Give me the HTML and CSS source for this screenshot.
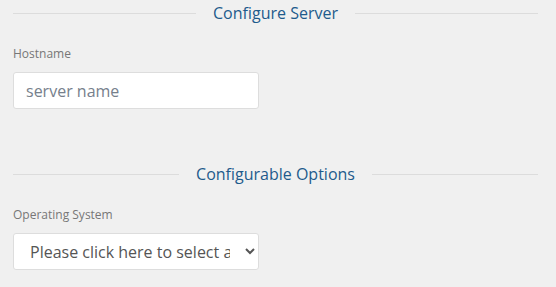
FILE: index.html
```html
<!DOCTYPE html>
<html lang="en">
<head>
  <meta charset="UTF-8">
  <meta name="viewport" content="width=device-width, initial-scale=1">
  <title>Configure Server</title>
  <link rel="stylesheet" href="styles.css">
</head>
<body>
  <div class="container">
    <!-- Server -->
    <section class="section">
      <h2 class="section-title"><span>Configure Server</span></h2>
      <label class="field-label" for="hostname">Hostname</label>
      <input type="text" id="hostname" class="form-control" placeholder="server name">
    </section>

    <!-- Options -->
    <section class="section section-options">
      <h2 class="section-title"><span>Configurable Options</span></h2>
      <label class="field-label" for="os">Operating System</label>
      <select id="os" class="form-control form-select">
        <option>Please click here to select an operating system</option>
        <option>Ubuntu 22.04</option>
        <option>Debian 12</option>
        <option>CentOS 7</option>
      </select>
    </section>
  </div>
</body>
</html>
```

FILE: styles.css
```css
:root {
  --title-color: #1e5b8c;
  --label-color: #777;
  --line-color: #dcdcdc;
  --bg: #f0f0f0;
  --white: #fff;
}
* {
  margin: 0;
  padding: 0;
  box-sizing: border-box;
}
body {
  font-family: 'Open Sans', sans-serif;
  background: var(--bg);
  color: #555;
}
.container {
  padding: 1px 18px 0 13px;
}
/* Section heading with lines on both sides */
.section-title {
  display: flex;
  align-items: center;
  gap: 17px;
  font-size: 16px;
  font-weight: 400;
  line-height: 24px;
  color: var(--title-color);
}
.section-title::before,
.section-title::after {
  content: "";
  flex: 1;
  height: 1px;
  background: var(--line-color);
}
.section-options {
  margin-top: 53px;
}
.field-label {
  display: block;
  margin-top: 20px;
  margin-bottom: 9px;
  font-size: 12px;
  line-height: 18px;
  color: var(--label-color);
}
.form-control {
  display: block;
  width: 246px;
  height: 37px;
  padding: 0 12px;
  font-family: inherit;
  font-size: 16px;
  color: #555;
  background: var(--white);
  border: 1px solid #ddd;
  border-radius: 3px;
  outline: none;
}
.form-control::placeholder {
  color: #76808c;
}
.form-select {
  padding-right: 12px;
}
```
